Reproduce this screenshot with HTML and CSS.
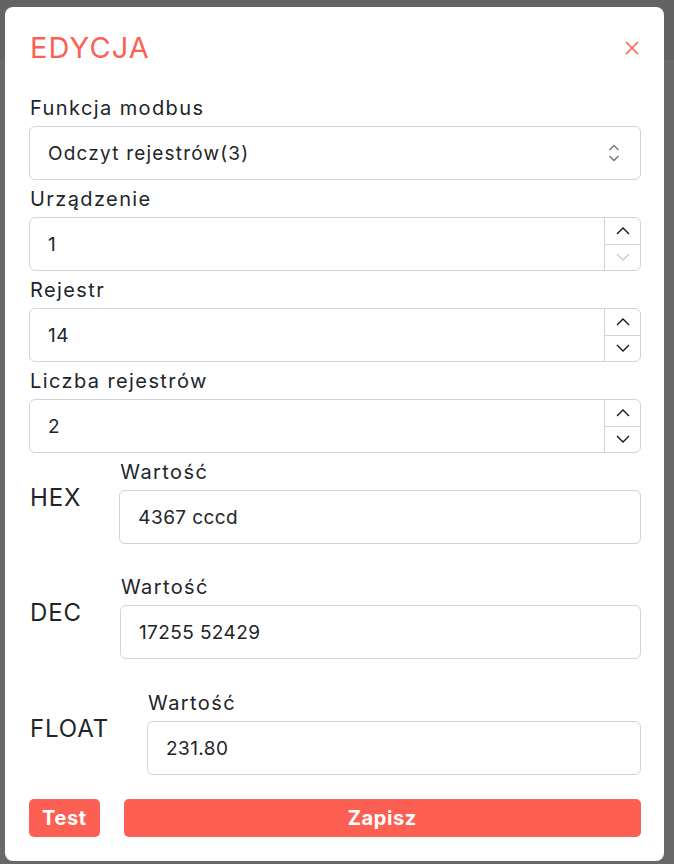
FILE: index.html
```html
<!DOCTYPE html>
<html lang="pl">
<head>
<meta charset="utf-8">
<title>Edycja</title>
<link rel="stylesheet" href="styles.css">
</head>
<body>
<div class="backdrop">
  <div class="modal">
    <div class="modal-header">
      <h1 class="title">EDYCJA</h1>
      <button class="close" aria-label="Zamknij">
        <svg width="14" height="14" viewBox="0 0 14 14"><path d="M1 1 L13 13 M13 1 L1 13" stroke="#fd5f52" stroke-width="1.6" fill="none"/></svg>
      </button>
    </div>
    <form class="modal-body">
      <div class="group">
        <label class="label">Funkcja modbus</label>
        <div class="field select">
          <span class="value">Odczyt rejestrów(3)</span>
          <svg class="sel-icon" width="12" height="18" viewBox="0 0 12 18"><path d="M1.5 6 L6 1.5 L10.5 6 M1.5 12 L6 16.5 L10.5 12" stroke="#6c757d" stroke-width="1.4" fill="none"/></svg>
        </div>
      </div>
      <div class="group">
        <label class="label">Urządzenie</label>
        <div class="field">
          <input class="input" type="text" value="1">
          <div class="spin">
            <span class="spin-btn"><svg width="14" height="8" viewBox="0 0 14 8"><path d="M1 7 L7 1 L13 7" stroke="#111" stroke-width="1.3" fill="none"/></svg></span>
            <span class="spin-btn"><svg width="14" height="8" viewBox="0 0 14 8"><path d="M1 1 L7 7 L13 1" stroke="#c8c8c8" stroke-width="1.3" fill="none"/></svg></span>
          </div>
        </div>
      </div>
      <div class="group">
        <label class="label">Rejestr</label>
        <div class="field">
          <input class="input" type="text" value="14">
          <div class="spin">
            <span class="spin-btn"><svg width="14" height="8" viewBox="0 0 14 8"><path d="M1 7 L7 1 L13 7" stroke="#111" stroke-width="1.3" fill="none"/></svg></span>
            <span class="spin-btn"><svg width="14" height="8" viewBox="0 0 14 8"><path d="M1 1 L7 7 L13 1" stroke="#111" stroke-width="1.3" fill="none"/></svg></span>
          </div>
        </div>
      </div>
      <div class="group">
        <label class="label">Liczba rejestrów</label>
        <div class="field">
          <input class="input" type="text" value="2">
          <div class="spin">
            <span class="spin-btn"><svg width="14" height="8" viewBox="0 0 14 8"><path d="M1 7 L7 1 L13 7" stroke="#111" stroke-width="1.3" fill="none"/></svg></span>
            <span class="spin-btn"><svg width="14" height="8" viewBox="0 0 14 8"><path d="M1 1 L7 7 L13 1" stroke="#111" stroke-width="1.3" fill="none"/></svg></span>
          </div>
        </div>
      </div>

      <div class="vrow first">
        <div class="vname">HEX</div>
        <div class="vcol">
          <label class="label">Wartość</label>
          <div class="field"><input class="input" type="text" value="4367 cccd"></div>
        </div>
      </div>
      <div class="vrow">
        <div class="vname">DEC</div>
        <div class="vcol">
          <label class="label">Wartość</label>
          <div class="field"><input class="input" type="text" value="17255 52429"></div>
        </div>
      </div>
      <div class="vrow last">
        <div class="vname">FLOAT</div>
        <div class="vcol">
          <label class="label">Wartość</label>
          <div class="field"><input class="input" type="text" value="231.80"></div>
        </div>
      </div>

      <div class="actions">
        <button type="button" class="btn">Test</button>
        <button type="button" class="btn btn-wide">Zapisz</button>
      </div>
    </form>
  </div>
</div>
</body>
</html>
```
FILE: styles.css
```css
* { box-sizing: border-box; }
html, body { margin: 0; padding: 0; }
body {
  background: linear-gradient(#636363 0, #636363 60px, #686868 60px);
  min-height: 864px;
  font-family: Inter, "Open Sans", sans-serif;
  color: #212529;
}
.backdrop {
  padding: 7px 10px 3px 5px;
}
.modal {
  background: #fff;
  border-radius: 8px;
  width: 659px;
  padding: 0 23px 24px 24px;
}
.modal-header {
  height: 82px;
  display: flex;
  align-items: center;
  justify-content: space-between;
}
.title {
  margin: 0;
  font-weight: 400;
  font-size: 29px;
  letter-spacing: 1.1px;
  color: #fd5f52;
  line-height: 1.2;
  padding-left: 1px;
}
.close {
  border: 0;
  background: transparent;
  padding: 0;
  margin-right: 2px;
  width: 14px;
  height: 14px;
  display: flex;
}
.modal-body { margin: 0; }
.group { margin-top: 4px; }
.label {
  display: block;
  font-size: 20px;
  line-height: 30px;
  letter-spacing: 1.4px;
  margin-bottom: 3px;
  padding-left: 1px;
}
.field {
  display: flex;
  align-items: stretch;
  height: 54px;
  border: 1px solid #ced4da;
  border-radius: 6px;
  overflow: hidden;
  background: #fff;
}
.select {
  align-items: center;
  justify-content: space-between;
  padding: 0 20px 0 18px;
}
.value, .input {
  font-family: Inter, "Open Sans", sans-serif;
  font-size: 19px;
  letter-spacing: 0.4px;
  color: #212529;
}
.value { letter-spacing: 1.2px; }
.input {
  flex: 1;
  min-width: 0;
  border: 0;
  outline: none;
  padding: 0 0 0 18px;
  background: transparent;
}
.sel-icon { display: block; }
.spin {
  width: 36px;
  border-left: 1px solid #ced4da;
  display: flex;
  flex-direction: column;
}
.spin-btn {
  flex: 1;
  display: flex;
  align-items: center;
  justify-content: center;
}
.spin-btn + .spin-btn { border-top: 1px solid #ced4da; }

.vrow {
  display: flex;
  align-items: center;
  margin-top: 28px;
}
.vrow.first { margin-top: 4px; }
.vrow.last { margin-top: 29px; }
.vname {
  font-size: 24px;
  letter-spacing: 0.9px;
  padding-left: 1px;
  margin-right: 38px;
  margin-bottom: 7px;
}
.vcol { flex: 1; }

.actions {
  display: flex;
  gap: 24px;
  margin-top: 24px;
}
.btn {
  height: 38px;
  border: 0;
  border-radius: 5px;
  background: #fd5f52;
  color: #fff;
  font-family: Inter, "Open Sans", sans-serif;
  font-weight: 700;
  font-size: 20px;
  letter-spacing: 0.6px;
  padding: 0 13px;
}
.btn-wide { flex: 1; }
```
